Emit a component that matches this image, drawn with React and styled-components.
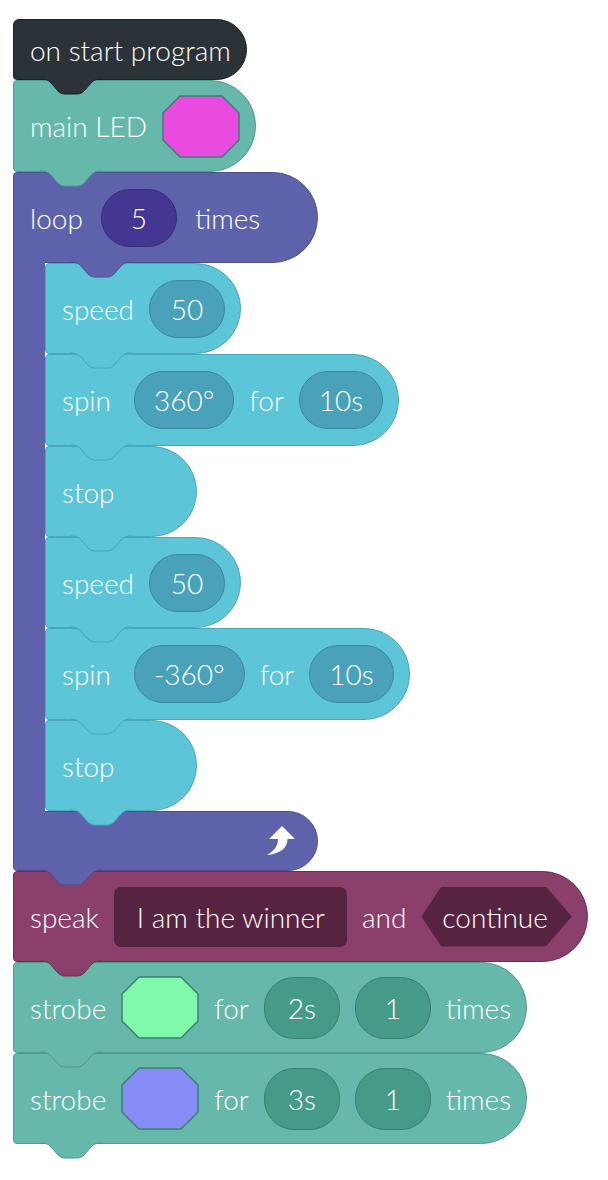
import React from 'react';
import styled, { createGlobalStyle } from 'styled-components';

const PALETTE = {
  start: { bg: '#2c3338', border: '#1b2024', field: '#1b2024', fieldBorder: '#111' },
  teal: { bg: '#66b8aa', border: '#4c9c8d', field: '#459b88', fieldBorder: '#38806f' },
  loop: { bg: '#5d62ab', border: '#4a4f93', field: '#433792', fieldBorder: '#362b7b' },
  cyan: { bg: '#5cc5d7', border: '#46a8ba', field: '#49a2b9', fieldBorder: '#3b899c' },
  speak: { bg: '#8b3f6b', border: '#6b2e51', field: '#562441', fieldBorder: '#562441' },
};

const GlobalStyle = createGlobalStyle`
  body {
    margin: 0;
    background: #fff;
    font-family: Lato, "Open Sans", sans-serif;
    font-weight: 300;
    color: #fff;
  }
`;

const Canvas = styled.div`
  display: flex;
  flex-direction: column;
  align-items: flex-start;
  padding: 19px 0 40px 13px;
`;

const Block = styled.div`
  position: relative;
  box-sizing: border-box;
  display: flex;
  align-items: center;
  gap: 15px;
  height: ${p => p.$h || 91}px;
  min-width: ${p => p.$minWidth || 0}px;
  padding: 0 15px 0 16px;
  background: ${p => PALETTE[p.$kind].bg};
  border: 1px solid ${p => PALETTE[p.$kind].border};
  border-radius: ${p => (p.$hat ? '6px 31px 31px 4px' : '4px 46px 46px 4px')};
`;

const Label = styled.span`
  font-size: 28px;
  line-height: 1;
  white-space: nowrap;
  margin-right: ${p => p.$extra || 0}px;
`;

const Pill = styled.span`
  box-sizing: border-box;
  display: flex;
  align-items: center;
  justify-content: center;
  min-width: 76px;
  height: ${p => p.$tall ? 62 : 58}px;
  padding: 0 19px;
  border-radius: 30px;
  background: ${p => PALETTE[p.$kind].field};
  border: 1px solid ${p => PALETTE[p.$kind].fieldBorder};
  font-size: 28px;
`;

const TextField = styled.span`
  display: flex;
  align-items: center;
  height: 60px;
  padding: 0 22px 0 23px;
  border-radius: 7px;
  background: ${PALETTE.speak.field};
  font-size: 28px;
  white-space: nowrap;
`;

const HexField = styled.span`
  display: flex;
  align-items: center;
  justify-content: center;
  height: 60px;
  padding: 0 24px 0 21px;
  background: ${PALETTE.speak.field};
  clip-path: polygon(0 50%, 20px 0, calc(100% - 26px) 0, 100% 50%, calc(100% - 26px) 100%, 20px 100%);
  font-size: 28px;
`;

const TabSvg = styled.svg`
  position: absolute;
  z-index: 3;
  top: 100%;
  left: ${p => p.$left || 26}px;
  overflow: visible;
`;

const Loop = styled.div`
  display: flex;
  flex-direction: column;
  align-items: flex-start;
`;

const LoopHead = styled(Block)`
  min-width: 305px;
  border-radius: 4px 46px 46px 0;
  gap: 18px;
`;

const LoopBody = styled.div`
  display: flex;
`;

const Arm = styled.div`
  position: relative;
  z-index: 1;
  box-sizing: border-box;
  width: 32px;
  margin: -1px 0;
  background: ${PALETTE.loop.bg};
  border-left: 1px solid ${PALETTE.loop.border};
`;

const Stack = styled.div`
  display: flex;
  flex-direction: column;
  align-items: flex-start;
`;

const LoopFoot = styled.div`
  position: relative;
  box-sizing: border-box;
  display: flex;
  align-items: center;
  justify-content: flex-end;
  width: 305px;
  height: 60px;
  padding-right: 21px;
  background: ${PALETTE.loop.bg};
  border: 1px solid ${PALETTE.loop.border};
  border-radius: 0 30px 30px 4px;
`;

const Tab = ({ kind, left }) => {
  const { bg, border } = PALETTE[kind];
  return (
    <TabSvg $left={left} width="62" height="16" viewBox="0 0 62 16">
      <path
        d="M0 0 C6 0 8 1 11 4 L18 12 C20 14 22 15 25 15 L37 15 C40 15 42 14 44 12 L51 4 C54 1 56 0 62 0"
        fill={bg}
        stroke={border}
        strokeWidth="1"
      />
    </TabSvg>
  );
};

const Octagon = ({ color }) => (
  <svg width="78" height="63" viewBox="0 0 78 63">
    <polygon
      points="18,1 60,1 77,18 77,45 60,62 18,62 1,45 1,18"
      fill={color}
      stroke="#3b7f70"
      strokeWidth="1.5"
      strokeLinejoin="round"
    />
  </svg>
);

const RepeatArrow = () => (
  <svg width="30" height="32" viewBox="0 0 30 32">
    <path
      d="M16 1 L29 14 L21.5 14 C21.5 23 14 29 1 30 C8 26 12 21 12 14 L3 14 Z"
      fill="#fff"
    />
  </svg>
);

const MotorBlocks = ({ degrees }) => (
  <>
    <Block $kind="cyan">
      <Label>speed</Label>
      <Pill $kind="cyan">50</Pill>
      <Tab kind="cyan" left={24} />
    </Block>
    <Block $kind="cyan" $h={92}>
      <Label $extra={8}>spin</Label>
      <Pill $kind="cyan">{degrees}</Pill>
      <Label>for</Label>
      <Pill $kind="cyan">10s</Pill>
      <Tab kind="cyan" left={24} />
    </Block>
    <Block $kind="cyan" $minWidth={152}>
      <Label>stop</Label>
      <Tab kind="cyan" left={24} />
    </Block>
  </>
);

const Strobe = ({ color, duration }) => (
  <Block $kind="teal">
    <Label>strobe</Label>
    <Octagon color={color} />
    <Label>for</Label>
    <Pill $kind="teal" $tall>{duration}</Pill>
    <Pill $kind="teal" $tall>1</Pill>
    <Label>times</Label>
    <Tab kind="teal" />
  </Block>
);

export default function App() {
  return (
    <>
      <GlobalStyle />
      <Canvas>
        <Block $kind="start" $h={61} $hat>
          <Label>on start program</Label>
          <Tab kind="start" />
        </Block>
        <Block $kind="teal" $h={92}>
          <Label>main LED</Label>
          <Octagon color="#e94ae0" />
          <Tab kind="teal" />
        </Block>

        <Loop>
          <LoopHead $kind="loop">
            <Label>loop</Label>
            <Pill $kind="loop">5</Pill>
            <Label>times</Label>
            <Tab kind="loop" left={56} />
          </LoopHead>
          <LoopBody>
            <Arm />
            <Stack>
              <MotorBlocks degrees="360°" />
              <MotorBlocks degrees="-360°" />
            </Stack>
          </LoopBody>
          <LoopFoot>
            <RepeatArrow />
            <Tab kind="loop" />
          </LoopFoot>
        </Loop>

        <Block $kind="speak">
          <Label>speak</Label>
          <TextField>I am the winner</TextField>
          <Label>and</Label>
          <HexField>continue</HexField>
          <Tab kind="speak" />
        </Block>
        <Strobe color="#80f9aa" duration="2s" />
        <Strobe color="#868df6" duration="3s" />
      </Canvas>
    </>
  );
}
